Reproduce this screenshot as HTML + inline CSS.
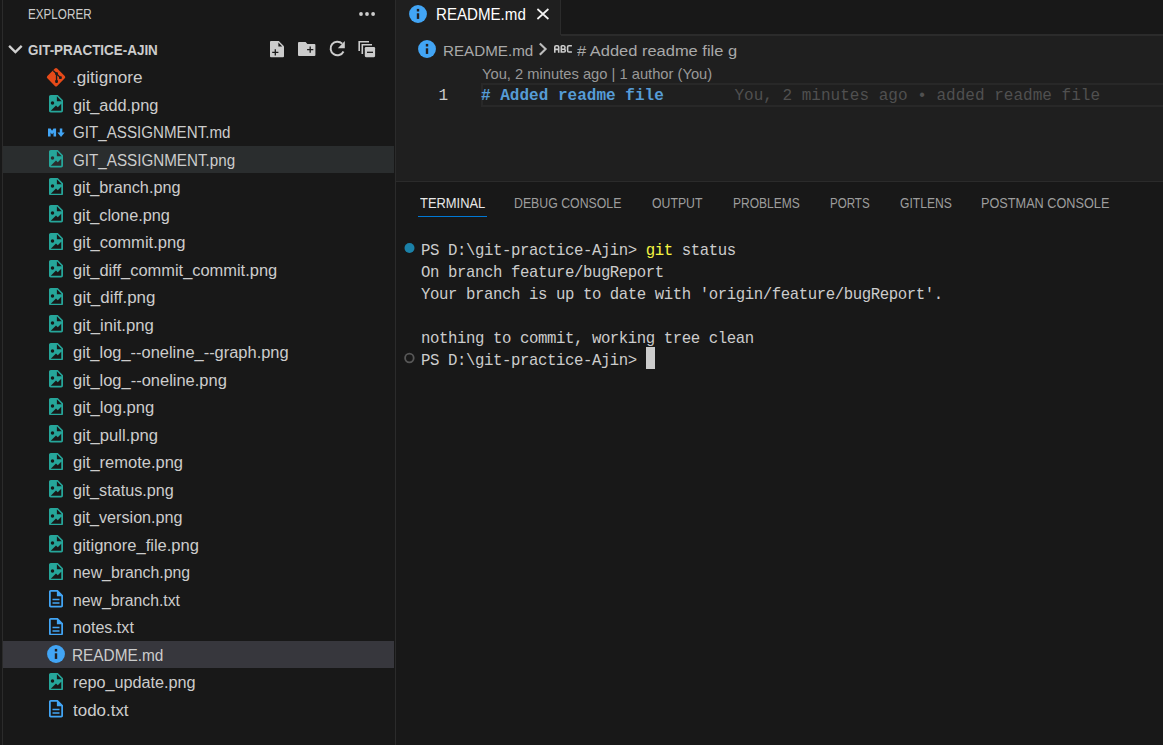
<!DOCTYPE html>
<html><head><meta charset="utf-8"><style>
html,body{margin:0;padding:0;width:1163px;height:745px;overflow:hidden;background:#181818}
.a{position:absolute;display:block}
.t{position:absolute;white-space:pre;transform-origin:0 0}
.m{position:absolute;white-space:pre;font-family:'Liberation Mono',monospace}
</style></head><body>
<div class="a" style="left:2px;top:0;width:1px;height:745px;background:#2b2b2b"></div>
<div class="a" style="left:395px;top:0;width:1px;height:745px;background:#2b2b2b"></div>
<div class="a" style="left:3px;top:146px;width:391px;height:27px;background:#2a2d2e"></div><div class="a" style="left:3px;top:641px;width:391px;height:27px;background:#37373d"></div>
<!-- explorer header -->
<svg class="a" style="left:355px;top:8px" width="24" height="12" viewBox="355 8 24 12"><circle cx="361" cy="14" r="1.9" fill="#cccccc"/><circle cx="367" cy="14" r="1.9" fill="#cccccc"/><circle cx="373.1" cy="14" r="1.9" fill="#cccccc"/></svg>
<svg class="a" style="left:4px;top:38px" width="24" height="24" viewBox="4 38 24 24"><path d="M9.1 45.9L15.4 52.1L21.7 45.9" fill="none" stroke="#d0d0d0" stroke-width="2.3"/></svg>
<svg class="a" style="left:262px;top:36px" width="120" height="28" viewBox="262 36 120 28">
 <path fill="#cccccc" d="M271 41H278.8L284 46.2V56.2Q284 57.2 283 57.2H271Q270 57.2 270 56.2V42Q270 41 271 41Z"/>
 <path fill="#181818" d="M278.4 42.6V46.6H282.2Z"/>
 <path stroke="#1a1a1a" stroke-width="1.3" d="M272.2 52.3H278.4M275.3 49.2V55.4"/>
 <path fill="#cccccc" d="M299 42H305.6L307.4 44H314.4Q315.4 44 315.4 45V55Q315.4 56 314.4 56H299Q298 56 298 55V43Q298 42 299 42Z"/>
 <path stroke="#1a1a1a" stroke-width="1.3" d="M307.1 49.7H313.3M310.2 46.6V52.8"/>
 <path fill="none" stroke="#cccccc" stroke-width="2" d="M342.2 43.6A6.8 6.8 0 1 0 343.5 51.5"/>
 <path fill="#cccccc" d="M337.8 48.2H344.8V41.1Z"/>
 <path fill="none" stroke="#cccccc" stroke-width="1.6" d="M359.2 51V41.7H369M362.3 54V44.8H372"/>
 <path fill="#cccccc" d="M366 47.1H374Q375.1 47.1 375.1 48.2V56.1Q375.1 57.2 374 57.2H366Q364.8 57.2 364.8 56.1V48.2Q364.8 47.1 366 47.1Z"/>
 <path stroke="#1a1a1a" stroke-width="1.3" d="M367 52.3H373"/>
</svg>
<svg class="a" style="left:44px;top:65.80px" width="24" height="22" viewBox="44 65.8 24 22"><path fill="#e64a19" d="M54.9 68.3Q56.05 67.15 57.2 68.3L64.75 75.85Q65.9 77 64.75 78.15L57.2 85.7Q56.05 86.85 54.9 85.7L47.35 78.15Q46.2 77 47.35 75.85Z"/><path fill="none" stroke="#1d1d1d" stroke-width="1.35" d="M53.2 70.3L56.55 73.5V81.3M56.55 73.5L60.4 77.4"/><rect x="55.15" y="72.1" width="2.8" height="2.8" rx="0.8" fill="#1d1d1d"/><rect x="59.0" y="76.0" width="2.8" height="2.8" rx="0.8" fill="#1d1d1d"/><rect x="55.15" y="79.9" width="2.8" height="2.8" rx="0.8" fill="#1d1d1d"/></svg><svg class="a" style="left:49.06px;top:95.00px" width="14" height="17.5" viewBox="4 2 16 20"><path fill="#26a69a" fill-rule="evenodd" d="M13,9H18.5L13,3.5V9M6,2H14L20,8V20A2,2 0 0,1 18,22H6C4.89,22 4,21.1 4,20V4C4,2.89 4.89,2 6,2M6,20H18V12L14,16L12,14L6,20M8,9A2,2 0 0,0 6,11A2,2 0 0,0 8,13A2,2 0 0,0 10,11A2,2 0 0,0 8,9Z"/></svg><svg class="a" style="left:40px;top:118.50px" width="30" height="27.5" viewBox="40 118.5 30 27.5"><path fill="#42a5f5" d="M48 128H50.6L52.05 130.3L53.5 128H56.1V136.1H53.5V132L52.05 134L50.6 132V136.1H48Z M59.8 128H62.3V132.1H64.7L61.05 136.6L57.4 132.1H59.8Z"/></svg><svg class="a" style="left:49.06px;top:150.00px" width="14" height="17.5" viewBox="4 2 16 20"><path fill="#26a69a" fill-rule="evenodd" d="M13,9H18.5L13,3.5V9M6,2H14L20,8V20A2,2 0 0,1 18,22H6C4.89,22 4,21.1 4,20V4C4,2.89 4.89,2 6,2M6,20H18V12L14,16L12,14L6,20M8,9A2,2 0 0,0 6,11A2,2 0 0,0 8,13A2,2 0 0,0 10,11A2,2 0 0,0 8,9Z"/></svg><svg class="a" style="left:49.06px;top:177.50px" width="14" height="17.5" viewBox="4 2 16 20"><path fill="#26a69a" fill-rule="evenodd" d="M13,9H18.5L13,3.5V9M6,2H14L20,8V20A2,2 0 0,1 18,22H6C4.89,22 4,21.1 4,20V4C4,2.89 4.89,2 6,2M6,20H18V12L14,16L12,14L6,20M8,9A2,2 0 0,0 6,11A2,2 0 0,0 8,13A2,2 0 0,0 10,11A2,2 0 0,0 8,9Z"/></svg><svg class="a" style="left:49.06px;top:205.00px" width="14" height="17.5" viewBox="4 2 16 20"><path fill="#26a69a" fill-rule="evenodd" d="M13,9H18.5L13,3.5V9M6,2H14L20,8V20A2,2 0 0,1 18,22H6C4.89,22 4,21.1 4,20V4C4,2.89 4.89,2 6,2M6,20H18V12L14,16L12,14L6,20M8,9A2,2 0 0,0 6,11A2,2 0 0,0 8,13A2,2 0 0,0 10,11A2,2 0 0,0 8,9Z"/></svg><svg class="a" style="left:49.06px;top:232.50px" width="14" height="17.5" viewBox="4 2 16 20"><path fill="#26a69a" fill-rule="evenodd" d="M13,9H18.5L13,3.5V9M6,2H14L20,8V20A2,2 0 0,1 18,22H6C4.89,22 4,21.1 4,20V4C4,2.89 4.89,2 6,2M6,20H18V12L14,16L12,14L6,20M8,9A2,2 0 0,0 6,11A2,2 0 0,0 8,13A2,2 0 0,0 10,11A2,2 0 0,0 8,9Z"/></svg><svg class="a" style="left:49.06px;top:260.00px" width="14" height="17.5" viewBox="4 2 16 20"><path fill="#26a69a" fill-rule="evenodd" d="M13,9H18.5L13,3.5V9M6,2H14L20,8V20A2,2 0 0,1 18,22H6C4.89,22 4,21.1 4,20V4C4,2.89 4.89,2 6,2M6,20H18V12L14,16L12,14L6,20M8,9A2,2 0 0,0 6,11A2,2 0 0,0 8,13A2,2 0 0,0 10,11A2,2 0 0,0 8,9Z"/></svg><svg class="a" style="left:49.06px;top:287.50px" width="14" height="17.5" viewBox="4 2 16 20"><path fill="#26a69a" fill-rule="evenodd" d="M13,9H18.5L13,3.5V9M6,2H14L20,8V20A2,2 0 0,1 18,22H6C4.89,22 4,21.1 4,20V4C4,2.89 4.89,2 6,2M6,20H18V12L14,16L12,14L6,20M8,9A2,2 0 0,0 6,11A2,2 0 0,0 8,13A2,2 0 0,0 10,11A2,2 0 0,0 8,9Z"/></svg><svg class="a" style="left:49.06px;top:315.00px" width="14" height="17.5" viewBox="4 2 16 20"><path fill="#26a69a" fill-rule="evenodd" d="M13,9H18.5L13,3.5V9M6,2H14L20,8V20A2,2 0 0,1 18,22H6C4.89,22 4,21.1 4,20V4C4,2.89 4.89,2 6,2M6,20H18V12L14,16L12,14L6,20M8,9A2,2 0 0,0 6,11A2,2 0 0,0 8,13A2,2 0 0,0 10,11A2,2 0 0,0 8,9Z"/></svg><svg class="a" style="left:49.06px;top:342.50px" width="14" height="17.5" viewBox="4 2 16 20"><path fill="#26a69a" fill-rule="evenodd" d="M13,9H18.5L13,3.5V9M6,2H14L20,8V20A2,2 0 0,1 18,22H6C4.89,22 4,21.1 4,20V4C4,2.89 4.89,2 6,2M6,20H18V12L14,16L12,14L6,20M8,9A2,2 0 0,0 6,11A2,2 0 0,0 8,13A2,2 0 0,0 10,11A2,2 0 0,0 8,9Z"/></svg><svg class="a" style="left:49.06px;top:370.00px" width="14" height="17.5" viewBox="4 2 16 20"><path fill="#26a69a" fill-rule="evenodd" d="M13,9H18.5L13,3.5V9M6,2H14L20,8V20A2,2 0 0,1 18,22H6C4.89,22 4,21.1 4,20V4C4,2.89 4.89,2 6,2M6,20H18V12L14,16L12,14L6,20M8,9A2,2 0 0,0 6,11A2,2 0 0,0 8,13A2,2 0 0,0 10,11A2,2 0 0,0 8,9Z"/></svg><svg class="a" style="left:49.06px;top:397.50px" width="14" height="17.5" viewBox="4 2 16 20"><path fill="#26a69a" fill-rule="evenodd" d="M13,9H18.5L13,3.5V9M6,2H14L20,8V20A2,2 0 0,1 18,22H6C4.89,22 4,21.1 4,20V4C4,2.89 4.89,2 6,2M6,20H18V12L14,16L12,14L6,20M8,9A2,2 0 0,0 6,11A2,2 0 0,0 8,13A2,2 0 0,0 10,11A2,2 0 0,0 8,9Z"/></svg><svg class="a" style="left:49.06px;top:425.00px" width="14" height="17.5" viewBox="4 2 16 20"><path fill="#26a69a" fill-rule="evenodd" d="M13,9H18.5L13,3.5V9M6,2H14L20,8V20A2,2 0 0,1 18,22H6C4.89,22 4,21.1 4,20V4C4,2.89 4.89,2 6,2M6,20H18V12L14,16L12,14L6,20M8,9A2,2 0 0,0 6,11A2,2 0 0,0 8,13A2,2 0 0,0 10,11A2,2 0 0,0 8,9Z"/></svg><svg class="a" style="left:49.06px;top:452.50px" width="14" height="17.5" viewBox="4 2 16 20"><path fill="#26a69a" fill-rule="evenodd" d="M13,9H18.5L13,3.5V9M6,2H14L20,8V20A2,2 0 0,1 18,22H6C4.89,22 4,21.1 4,20V4C4,2.89 4.89,2 6,2M6,20H18V12L14,16L12,14L6,20M8,9A2,2 0 0,0 6,11A2,2 0 0,0 8,13A2,2 0 0,0 10,11A2,2 0 0,0 8,9Z"/></svg><svg class="a" style="left:49.06px;top:480.00px" width="14" height="17.5" viewBox="4 2 16 20"><path fill="#26a69a" fill-rule="evenodd" d="M13,9H18.5L13,3.5V9M6,2H14L20,8V20A2,2 0 0,1 18,22H6C4.89,22 4,21.1 4,20V4C4,2.89 4.89,2 6,2M6,20H18V12L14,16L12,14L6,20M8,9A2,2 0 0,0 6,11A2,2 0 0,0 8,13A2,2 0 0,0 10,11A2,2 0 0,0 8,9Z"/></svg><svg class="a" style="left:49.06px;top:507.50px" width="14" height="17.5" viewBox="4 2 16 20"><path fill="#26a69a" fill-rule="evenodd" d="M13,9H18.5L13,3.5V9M6,2H14L20,8V20A2,2 0 0,1 18,22H6C4.89,22 4,21.1 4,20V4C4,2.89 4.89,2 6,2M6,20H18V12L14,16L12,14L6,20M8,9A2,2 0 0,0 6,11A2,2 0 0,0 8,13A2,2 0 0,0 10,11A2,2 0 0,0 8,9Z"/></svg><svg class="a" style="left:49.06px;top:535.00px" width="14" height="17.5" viewBox="4 2 16 20"><path fill="#26a69a" fill-rule="evenodd" d="M13,9H18.5L13,3.5V9M6,2H14L20,8V20A2,2 0 0,1 18,22H6C4.89,22 4,21.1 4,20V4C4,2.89 4.89,2 6,2M6,20H18V12L14,16L12,14L6,20M8,9A2,2 0 0,0 6,11A2,2 0 0,0 8,13A2,2 0 0,0 10,11A2,2 0 0,0 8,9Z"/></svg><svg class="a" style="left:49.06px;top:562.50px" width="14" height="17.5" viewBox="4 2 16 20"><path fill="#26a69a" fill-rule="evenodd" d="M13,9H18.5L13,3.5V9M6,2H14L20,8V20A2,2 0 0,1 18,22H6C4.89,22 4,21.1 4,20V4C4,2.89 4.89,2 6,2M6,20H18V12L14,16L12,14L6,20M8,9A2,2 0 0,0 6,11A2,2 0 0,0 8,13A2,2 0 0,0 10,11A2,2 0 0,0 8,9Z"/></svg><svg class="a" style="left:49.06px;top:590.20px" width="14" height="17.5" viewBox="4 2 16 20"><path fill="#42a5f5" d="M8 16h8v1.7H8zm0-4h8v1.7H8zm6-10H6c-1.1 0-2 .9-2 2v16c0 1.1.89 2 1.99 2H18c1.1 0 2-.9 2-2V8zm4 18H6V4h7v5h5z"/></svg><svg class="a" style="left:49.06px;top:617.70px" width="14" height="17.5" viewBox="4 2 16 20"><path fill="#42a5f5" d="M8 16h8v1.7H8zm0-4h8v1.7H8zm6-10H6c-1.1 0-2 .9-2 2v16c0 1.1.89 2 1.99 2H18c1.1 0 2-.9 2-2V8zm4 18H6V4h7v5h5z"/></svg><svg class="a" style="left:47.00px;top:645.00px" width="18" height="18" viewBox="0 0 18 18"><circle cx="9" cy="9" r="8.95" fill="#42a5f5"/><rect x="7.8" y="3.9" width="2.4" height="2.6" fill="#231f20"/><rect x="7.8" y="8.3" width="2.4" height="5.6" fill="#231f20"/></svg><svg class="a" style="left:49.06px;top:672.50px" width="14" height="17.5" viewBox="4 2 16 20"><path fill="#26a69a" fill-rule="evenodd" d="M13,9H18.5L13,3.5V9M6,2H14L20,8V20A2,2 0 0,1 18,22H6C4.89,22 4,21.1 4,20V4C4,2.89 4.89,2 6,2M6,20H18V12L14,16L12,14L6,20M8,9A2,2 0 0,0 6,11A2,2 0 0,0 8,13A2,2 0 0,0 10,11A2,2 0 0,0 8,9Z"/></svg><svg class="a" style="left:49.06px;top:700.20px" width="14" height="17.5" viewBox="4 2 16 20"><path fill="#42a5f5" d="M8 16h8v1.7H8zm0-4h8v1.7H8zm6-10H6c-1.1 0-2 .9-2 2v16c0 1.1.89 2 1.99 2H18c1.1 0 2-.9 2-2V8zm4 18H6V4h7v5h5z"/></svg>
<!-- editor -->
<div class="a" style="left:396px;top:0;width:767px;height:181px;background:#1f1f1f"></div>
<div class="a" style="left:561px;top:0;width:602px;height:34px;background:#181818"></div>
<div class="a" style="left:561px;top:34px;width:602px;height:2px;background:#2b2b2b"></div>
<div class="a" style="left:560px;top:0;width:1px;height:35px;background:#2b2b2b"></div>
<svg class="a" style="left:408.90px;top:4.90px" width="18" height="18" viewBox="0 0 18 18"><circle cx="9" cy="9" r="8.95" fill="#42a5f5"/><rect x="7.8" y="3.9" width="2.4" height="2.6" fill="#231f20"/><rect x="7.8" y="8.3" width="2.4" height="5.6" fill="#231f20"/></svg>
<svg class="a" style="left:530px;top:2px" width="26" height="26" viewBox="530 2 26 26"><path d="M537.4 9L548.4 19M548.4 9L537.4 19" stroke="#f2f2f2" stroke-width="1.7" fill="none"/></svg>
<svg class="a" style="left:417.60px;top:40.00px" width="18" height="18" viewBox="0 0 18 18"><circle cx="9" cy="9" r="8.95" fill="#42a5f5"/><rect x="7.8" y="3.9" width="2.4" height="2.6" fill="#231f20"/><rect x="7.8" y="8.3" width="2.4" height="5.6" fill="#231f20"/></svg>
<svg class="a" style="left:534px;top:38px" width="42" height="24" viewBox="534 38 42 24"><path d="M539.8 43.4L545.6 49.1L539.8 54.8" fill="none" stroke="#bdbdbd" stroke-width="2.1"/>
<path fill="none" stroke="#cccccc" stroke-width="1.6" d="M554.8 52.8V47.1Q554.8 45.7 556.2 45.7H557.3Q558.7 45.7 558.7 47.1V52.8M554.8 49.4H558.7M561.3 45.7V52H564Q565.3 52 565.3 50.7Q565.3 49.2 564 49.2H561.3M561.3 45.7H563.7Q565 45.7 565 47.4Q565 49.2 563.7 49.2M571.9 45.7H568.9Q567.6 45.7 567.6 47V50.7Q567.6 52 568.9 52H571.9"/></svg>
<div class="a" style="left:481px;top:83px;width:682px;height:24px;box-sizing:border-box;border:2px solid #282828;border-right:none"></div>
<div class="m" style="left:438.5px;top:84px;line-height:24px;font-size:16px;color:#cccccc">1</div>
<div class="m" style="left:481px;top:84px;line-height:24px;font-size:16px;font-weight:700;color:#569cd6;letter-spacing:0.02px"># Added readme file</div>
<div class="m" style="left:734.4px;top:84px;line-height:24px;font-size:16px;color:#505050;letter-spacing:0.02px">You, 2 minutes ago • added readme file</div>
<!-- panel -->
<div class="a" style="left:396px;top:181px;width:767px;height:1px;background:#2b2b2b"></div>
<div class="a" style="left:418px;top:216px;width:69px;height:1px;background:#0078d4"></div>
<svg class="a" style="left:400px;top:240px" width="20" height="130" viewBox="400 240 20 130"><circle cx="409.5" cy="248" r="5" fill="#1b81a8"/><circle cx="409.4" cy="358" r="4.3" fill="none" stroke="#575757" stroke-width="1.8"/></svg>
<div class="m" style="left:421px;top:240px;height:22px;line-height:22px;font-size:15.7px;letter-spacing:-0.420px;color:#cccccc">PS D:\git-practice-Ajin&gt; <span style="color:#f5f543">git</span> status</div><div class="m" style="left:421px;top:262px;height:22px;line-height:22px;font-size:15.7px;letter-spacing:-0.420px;color:#cccccc">On branch feature/bugReport</div><div class="m" style="left:421px;top:284px;height:22px;line-height:22px;font-size:15.7px;letter-spacing:-0.420px;color:#cccccc">Your branch is up to date with 'origin/feature/bugReport'.</div><div class="m" style="left:421px;top:306px;height:22px;line-height:22px;font-size:15.7px;letter-spacing:-0.420px;color:#cccccc"></div><div class="m" style="left:421px;top:328px;height:22px;line-height:22px;font-size:15.7px;letter-spacing:-0.420px;color:#cccccc">nothing to commit, working tree clean</div><div class="m" style="left:421px;top:350px;height:22px;line-height:22px;font-size:15.7px;letter-spacing:-0.420px;color:#cccccc">PS D:\git-practice-Ajin&gt; </div>
<div class="a" style="left:646px;top:347px;width:9px;height:22px;background:#cccccc"></div>
<div class="t" style="left:27.67px;top:5.00px;font-family:'Liberation Sans';font-size:13.9px;font-weight:400;line-height:19px;color:#cccccc;transform:scaleX(0.8409)">EXPLORER</div><div class="t" style="left:27.62px;top:41.00px;font-family:'Liberation Sans';font-size:13.9px;font-weight:700;line-height:19px;color:#cccccc;transform:scaleX(0.9667)">GIT-PRACTICE-AJIN</div><div class="t" style="left:71.90px;top:67.20px;font-family:'Liberation Sans';font-size:16px;font-weight:400;line-height:21px;color:#cccccc;transform:scaleX(1.0703)">.gitignore</div><div class="t" style="left:72.79px;top:94.70px;font-family:'Liberation Sans';font-size:16px;font-weight:400;line-height:21px;color:#cccccc;transform:scaleX(1.0203)">git_add.png</div><div class="t" style="left:72.64px;top:122.20px;font-family:'Liberation Sans';font-size:16px;font-weight:400;line-height:21px;color:#cccccc;transform:scaleX(0.9474)">GIT_ASSIGNMENT.md</div><div class="t" style="left:72.64px;top:149.70px;font-family:'Liberation Sans';font-size:16px;font-weight:400;line-height:21px;color:#cccccc;transform:scaleX(0.9496)">GIT_ASSIGNMENT.png</div><div class="t" style="left:72.79px;top:177.20px;font-family:'Liberation Sans';font-size:16px;font-weight:400;line-height:21px;color:#cccccc;transform:scaleX(1.0157)">git_branch.png</div><div class="t" style="left:72.79px;top:204.70px;font-family:'Liberation Sans';font-size:16px;font-weight:400;line-height:21px;color:#cccccc;transform:scaleX(1.0183)">git_clone.png</div><div class="t" style="left:72.78px;top:232.20px;font-family:'Liberation Sans';font-size:16px;font-weight:400;line-height:21px;color:#cccccc;transform:scaleX(1.0365)">git_commit.png</div><div class="t" style="left:72.78px;top:259.70px;font-family:'Liberation Sans';font-size:16px;font-weight:400;line-height:21px;color:#cccccc;transform:scaleX(1.0264)">git_diff_commit_commit.png</div><div class="t" style="left:72.77px;top:287.20px;font-family:'Liberation Sans';font-size:16px;font-weight:400;line-height:21px;color:#cccccc;transform:scaleX(1.0564)">git_diff.png</div><div class="t" style="left:72.77px;top:314.70px;font-family:'Liberation Sans';font-size:16px;font-weight:400;line-height:21px;color:#cccccc;transform:scaleX(1.0436)">git_init.png</div><div class="t" style="left:72.78px;top:342.20px;font-family:'Liberation Sans';font-size:16px;font-weight:400;line-height:21px;color:#cccccc;transform:scaleX(1.0272)">git_log_--oneline_--graph.png</div><div class="t" style="left:72.78px;top:369.70px;font-family:'Liberation Sans';font-size:16px;font-weight:400;line-height:21px;color:#cccccc;transform:scaleX(1.0294)">git_log_--oneline.png</div><div class="t" style="left:72.78px;top:397.20px;font-family:'Liberation Sans';font-size:16px;font-weight:400;line-height:21px;color:#cccccc;transform:scaleX(1.0379)">git_log.png</div><div class="t" style="left:72.78px;top:424.70px;font-family:'Liberation Sans';font-size:16px;font-weight:400;line-height:21px;color:#cccccc;transform:scaleX(1.0381)">git_pull.png</div><div class="t" style="left:72.78px;top:452.20px;font-family:'Liberation Sans';font-size:16px;font-weight:400;line-height:21px;color:#cccccc;transform:scaleX(1.0310)">git_remote.png</div><div class="t" style="left:72.79px;top:479.70px;font-family:'Liberation Sans';font-size:16px;font-weight:400;line-height:21px;color:#cccccc;transform:scaleX(1.0110)">git_status.png</div><div class="t" style="left:72.79px;top:507.20px;font-family:'Liberation Sans';font-size:16px;font-weight:400;line-height:21px;color:#cccccc;transform:scaleX(1.0092)">git_version.png</div><div class="t" style="left:72.78px;top:534.70px;font-family:'Liberation Sans';font-size:16px;font-weight:400;line-height:21px;color:#cccccc;transform:scaleX(1.0335)">gitignore_file.png</div><div class="t" style="left:73.31px;top:562.20px;font-family:'Liberation Sans';font-size:16px;font-weight:400;line-height:21px;color:#cccccc;transform:scaleX(0.9904)">new_branch.png</div><div class="t" style="left:73.31px;top:589.70px;font-family:'Liberation Sans';font-size:16px;font-weight:400;line-height:21px;color:#cccccc;transform:scaleX(0.9855)">new_branch.txt</div><div class="t" style="left:73.29px;top:617.20px;font-family:'Liberation Sans';font-size:16px;font-weight:400;line-height:21px;color:#cccccc;transform:scaleX(1.0062)">notes.txt</div><div class="t" style="left:72.15px;top:644.70px;font-family:'Liberation Sans';font-size:16px;font-weight:400;line-height:21px;color:#cccccc;transform:scaleX(0.9609)">README.md</div><div class="t" style="left:73.29px;top:672.20px;font-family:'Liberation Sans';font-size:16px;font-weight:400;line-height:21px;color:#cccccc;transform:scaleX(1.0126)">repo_update.png</div><div class="t" style="left:73.19px;top:699.70px;font-family:'Liberation Sans';font-size:16px;font-weight:400;line-height:21px;color:#cccccc;transform:scaleX(1.0588)">todo.txt</div><div class="t" style="left:435.96px;top:4.00px;font-family:'Liberation Sans';font-size:15.9px;font-weight:400;line-height:21px;color:#ffffff;transform:scaleX(0.9503)">README.md</div><div class="t" style="left:442.70px;top:40.50px;font-family:'Liberation Sans';font-size:15.2px;font-weight:400;line-height:20px;color:#a9a9a9;transform:scaleX(0.9998)">README.md</div><div class="t" style="left:576.60px;top:40.50px;font-family:'Liberation Sans';font-size:15.2px;font-weight:400;line-height:20px;color:#a9a9a9;transform:scaleX(1.0835)"># Added readme file g</div><div class="t" style="left:481.89px;top:65.00px;font-family:'Liberation Sans';font-size:14.4px;font-weight:400;line-height:19px;color:#999999;transform:scaleX(1.0226)">You, 2 minutes ago | 1 author (You)</div><div class="t" style="left:419.73px;top:194.00px;font-family:'Liberation Sans';font-size:14.2px;font-weight:400;line-height:19px;color:#e7e7e7;transform:scaleX(0.9100)">TERMINAL</div><div class="t" style="left:514.25px;top:194.00px;font-family:'Liberation Sans';font-size:14.2px;font-weight:400;line-height:19px;color:#9d9d9d;transform:scaleX(0.8674)">DEBUG CONSOLE</div><div class="t" style="left:652.08px;top:194.00px;font-family:'Liberation Sans';font-size:14.2px;font-weight:400;line-height:19px;color:#9d9d9d;transform:scaleX(0.8643)">OUTPUT</div><div class="t" style="left:733.47px;top:194.00px;font-family:'Liberation Sans';font-size:14.2px;font-weight:400;line-height:19px;color:#9d9d9d;transform:scaleX(0.8480)">PROBLEMS</div><div class="t" style="left:830.30px;top:194.00px;font-family:'Liberation Sans';font-size:14.2px;font-weight:400;line-height:19px;color:#9d9d9d;transform:scaleX(0.8151)">PORTS</div><div class="t" style="left:899.60px;top:194.00px;font-family:'Liberation Sans';font-size:14.2px;font-weight:400;line-height:19px;color:#9d9d9d;transform:scaleX(0.8540)">GITLENS</div><div class="t" style="left:980.72px;top:194.00px;font-family:'Liberation Sans';font-size:14.2px;font-weight:400;line-height:19px;color:#9d9d9d;transform:scaleX(0.8948)">POSTMAN CONSOLE</div>
</body></html>
